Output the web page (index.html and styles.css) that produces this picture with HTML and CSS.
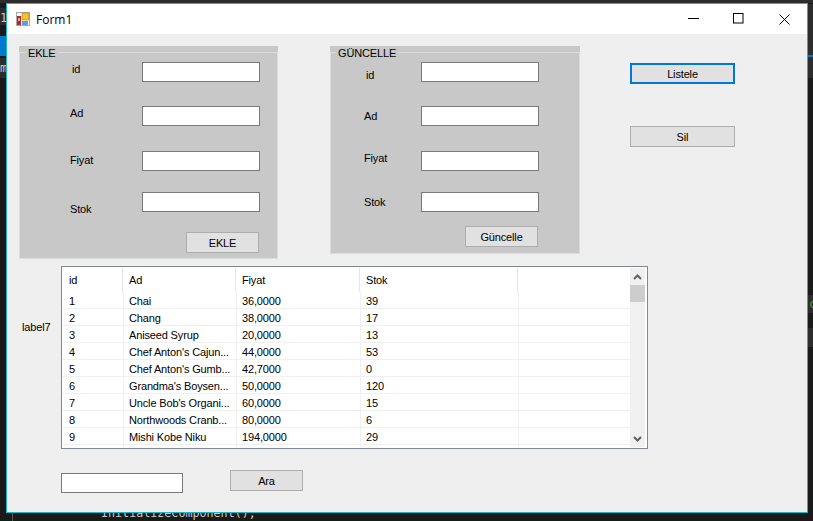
FILE: index.html
```html
<!DOCTYPE html>
<html lang="en">
<head>
  <meta charset="UTF-8">
  <title>Form1</title>
  <link rel="stylesheet" href="styles.css">
</head>
<body>

  <!-- editor showing behind the form -->
  <div class="editor">
    <div class="strip strip-top"></div>
    <div class="strip strip-tab"><span class="code-bit">1</span></div>
    <div class="strip strip-active"></div>
    <div class="strip strip-file"><span class="code-bit">m</span></div>
    <div class="strip strip-right-a"></div>
    <div class="strip strip-right-blue"></div>
    <div class="strip strip-right-b"><span class="code-green">c</span></div>
    <div class="strip strip-right-c"></div>
    <div class="indent-line"></div>
    <div class="code-line">InitializeComponent();</div>
  </div>

  <div class="window">
    <div class="titlebar">
      <svg class="app-icon" width="14" height="14" viewBox="0 0 14 14">
        <rect x="0.5" y="0.5" width="13" height="13" fill="#fff" stroke="#a8a8a8"/>
        <rect x="1" y="4" width="4" height="9" fill="#b02a2a"/>
        <rect x="2" y="6" width="2" height="3" fill="#e8a0a0"/>
        <rect x="6" y="1" width="7" height="7" fill="#f2c230"/>
        <rect x="6" y="1" width="7" height="7" fill="none" stroke="#a87d10" stroke-width="0.6"/>
        <rect x="6" y="9" width="6" height="4" fill="#5b9be8"/>
      </svg>
      <span class="title">Form1</span>
      <div class="caption-buttons">
        <div class="caption-btn">
          <svg width="12" height="12" viewBox="0 0 12 12"><path d="M1 5.5H12" stroke="#000" fill="none"/></svg>
        </div>
        <div class="caption-btn">
          <svg width="12" height="12" viewBox="0 0 12 12"><rect x="0.5" y="0.5" width="9.5" height="9.5" stroke="#000" fill="none"/></svg>
        </div>
        <div class="caption-btn caption-close">
          <svg width="11" height="11" viewBox="0 0 11 11"><path d="M0.5 0.5L10.5 10.5M10.5 0.5L0.5 10.5" stroke="#000" fill="none"/></svg>
        </div>
      </div>
    </div>

    <div class="client">
      <div class="top-row">
        <div class="group group-add">
          <div class="frame">
            <span class="legend">EKLE</span>
            <div class="field field-a"><label class="nudge-id">id</label><input type="text"></div>
            <div class="field field-b"><label>Ad</label><input type="text"></div>
            <div class="field field-c"><label class="nudge-2">Fiyat</label><input type="text"></div>
            <div class="field field-d"><label class="nudge-10">Stok</label><input type="text"></div>
            <div class="form-actions"><button class="btn">EKLE</button></div>
          </div>
        </div>

        <div class="group group-update">
          <div class="frame">
            <span class="legend">GÜNCELLE</span>
            <div class="field field-a"><label class="nudge-id nudge-6">id</label><input type="text"></div>
            <div class="field field-b"><label class="nudge-3">Ad</label><input type="text"></div>
            <div class="field field-c"><label>Fiyat</label><input type="text"></div>
            <div class="field field-d"><label class="nudge-3">Stok</label><input type="text"></div>
            <div class="form-actions"><button class="btn">Güncelle</button></div>
          </div>
        </div>

        <div class="side-actions">
          <button class="btn btn-wide btn-focus">Listele</button>
          <button class="btn btn-wide">Sil</button>
        </div>
      </div>

      <div class="grid-row">
        <span class="grid-label">label7</span>
        <div class="grid-view">
          <div class="grid-body">
            <div class="grid-head">
              <div>id</div><div>Ad</div><div>Fiyat</div><div>Stok</div><div></div>
            </div>
            <div class="grid-line"><div>1</div><div>Chai</div><div>36,0000</div><div>39</div><div></div></div>
            <div class="grid-line"><div>2</div><div>Chang</div><div>38,0000</div><div>17</div><div></div></div>
            <div class="grid-line"><div>3</div><div>Aniseed Syrup</div><div>20,0000</div><div>13</div><div></div></div>
            <div class="grid-line"><div>4</div><div>Chef Anton's Cajun...</div><div>44,0000</div><div>53</div><div></div></div>
            <div class="grid-line"><div>5</div><div>Chef Anton's Gumb...</div><div>42,7000</div><div>0</div><div></div></div>
            <div class="grid-line"><div>6</div><div>Grandma's Boysen...</div><div>50,0000</div><div>120</div><div></div></div>
            <div class="grid-line"><div>7</div><div>Uncle Bob's Organi...</div><div>60,0000</div><div>15</div><div></div></div>
            <div class="grid-line"><div>8</div><div>Northwoods Cranb...</div><div>80,0000</div><div>6</div><div></div></div>
            <div class="grid-line"><div>9</div><div>Mishi Kobe Niku</div><div>194,0000</div><div>29</div><div></div></div>
            <div class="grid-line"><div></div><div></div><div></div><div></div><div></div></div>
          </div>
          <div class="scrollbar">
            <div class="scroll-arrow">
              <svg width="9" height="6" viewBox="0 0 9 6"><path d="M1 5L4.5 1.5L8 5" stroke="#606060" stroke-width="2" fill="none"/></svg>
            </div>
            <div class="scroll-thumb"></div>
            <div class="scroll-track"></div>
            <div class="scroll-arrow">
              <svg width="9" height="6" viewBox="0 0 9 6"><path d="M1 1L4.5 4.5L8 1" stroke="#606060" stroke-width="2" fill="none"/></svg>
            </div>
          </div>
        </div>
      </div>

      <div class="search-row">
        <input class="search-input" type="text">
        <button class="btn">Ara</button>
      </div>
    </div>
  </div>

</body>
</html>
```

FILE: styles.css
```css
* {
  box-sizing: border-box;
}
body {
  margin: 0;
  width: 813px;
  height: 521px;
  overflow: hidden;
  position: relative;
  background-color: #1a1a1a;
  font-family: "Liberation Sans", Arial, sans-serif;
  font-size: 11px;
  letter-spacing: -0.15px;
  color: #000;
}

/* editor behind the window */
.strip {
  position: absolute;
  background: #2d2d2d;
  overflow: hidden;
}
.strip-top {
  left: 0;
  top: 0;
  width: 813px;
  height: 3px;
}
.strip-tab {
  left: 0;
  top: 8px;
  width: 6px;
  height: 17px;
}
.strip-active {
  left: 0;
  top: 36px;
  width: 6px;
  height: 20px;
  background: #007acc;
}
.strip-file {
  left: 0;
  top: 58px;
  width: 6px;
  height: 20px;
}
.strip-right-a {
  left: 808px;
  top: 4px;
  width: 5px;
  height: 74px;
}
.strip-right-blue {
  left: 808px;
  top: 55px;
  width: 5px;
  height: 2px;
  background: #007acc;
}
.strip-right-b {
  left: 808px;
  top: 295px;
  width: 5px;
  height: 18px;
}
.strip-right-c {
  left: 808px;
  top: 328px;
  width: 5px;
  height: 19px;
}
.code-bit {
  position: absolute;
  left: 0;
  top: 3px;
  color: #c8c8c8;
  font-family: "DejaVu Sans Mono", monospace;
  font-size: 12px;
  line-height: 14px;
}
.code-green {
  position: absolute;
  left: 1px;
  top: 2px;
  color: #4e9a3a;
  font-family: "DejaVu Sans Mono", monospace;
  font-size: 12px;
  line-height: 14px;
}
.indent-line {
  position: absolute;
  left: 12px;
  top: 513px;
  width: 1px;
  height: 8px;
  background: #555;
}
.code-line {
  position: absolute;
  left: 101px;
  top: 505px;
  color: #c8c8c8;
  font-family: "DejaVu Sans Mono", monospace;
  font-size: 11.7px;
  letter-spacing: 0;
  line-height: 16px;
}

/* the form */
.window {
  position: absolute;
  left: 6px;
  top: 3px;
  width: 802px;
  height: 510px;
  border: 1px solid #17b8c8;
  background: #efefef;
}
.titlebar {
  display: flex;
  align-items: center;
  height: 30px;
  padding-left: 9px;
  background: #fff;
}
.app-icon {
  margin-right: 6px;
}
.title {
  font-family: "Open Sans", sans-serif;
  font-size: 12px;
  letter-spacing: 0;
}
.caption-buttons {
  display: flex;
  margin-left: auto;
}
.caption-btn {
  display: flex;
  align-items: center;
  justify-content: center;
  width: 46px;
  height: 30px;
}
.caption-close {
  width: 45px;
}
.client {
  padding: 12px 0 0 12px;
}
.top-row {
  display: flex;
  align-items: flex-start;
  height: 220px;
}

/* group boxes */
.group {
  padding-top: 6px;
  background: #c8c8c8;
}
.group-add {
  width: 259px;
  height: 213px;
}
.group-update {
  width: 250px;
  height: 208px;
  margin-left: 52px;
}
.frame {
  position: relative;
  height: 100%;
  padding-top: 9px;
  border: 1px solid #dcdcdc;
}
.group-add .frame {
  padding-left: 50px;
}
.group-update .frame {
  padding-left: 33px;
}
.legend {
  position: absolute;
  left: 6px;
  top: -7px;
  padding: 0 2px;
  background: #c8c8c8;
  line-height: 14px;
}
.group-update .legend {
  left: 5px;
}
.field {
  display: flex;
  align-items: flex-start;
}
.field-a {
  height: 44px;
}
.field-b {
  height: 45px;
}
.field-c {
  height: 41px;
}
.field-d {
  height: 40px;
}
.group-update .field-d {
  height: 34px;
}
.field label {
  line-height: 14px;
}
.group-add .field label {
  width: 72px;
}
.group-update .field label {
  width: 57px;
}
.field input, .search-input {
  width: 118px;
  height: 20px;
  padding: 1px 3px;
  border: 1px solid #7a7a7a;
  border-radius: 0;
  background: #fff;
}
.nudge-id {
  padding-left: 2px;
}
.nudge-2 {
  margin-top: 2px;
}
.nudge-3 {
  margin-top: 3px;
}
.nudge-6 {
  margin-top: 6px;
}
.nudge-10 {
  margin-top: 10px;
}
.form-actions {
  display: flex;
  justify-content: flex-end;
}
.group-add .form-actions {
  padding-right: 18px;
}
.group-update .form-actions {
  padding-right: 41px;
}

/* buttons */
.btn {
  width: 73px;
  height: 21px;
  padding: 0;
  border: 1px solid #adadad;
  border-radius: 0;
  background: #e1e1e1;
  color: #000;
  font-family: "Liberation Sans", Arial, sans-serif;
  font-size: 11px;
  letter-spacing: -0.15px;
}
.btn-wide {
  width: 105px;
}
.btn-focus {
  border: 2px solid #0078d7;
}
.side-actions {
  display: flex;
  flex-direction: column;
  gap: 42px;
  margin-left: 50px;
  padding-top: 17px;
}

/* data grid */
.grid-row {
  display: flex;
  align-items: flex-start;
}
.grid-label {
  width: 42px;
  margin-top: 54px;
  padding-left: 3px;
  line-height: 14px;
}
.grid-view {
  display: flex;
  width: 587px;
  height: 183px;
  padding: 1px 2px 1px 1px;
  border: 1px solid #828790;
  background: #fff;
}
.grid-body {
  width: 567px;
  height: 179px;
  overflow: hidden;
}
.grid-head, .grid-line {
  display: grid;
}
.grid-head {
  grid-template-columns: 60px 113px 124px 158px 1fr;
  height: 24px;
  line-height: 24px;
}
.grid-head div {
  padding-left: 6px;
  border-right: 1px solid #e5e5e5;
}
.grid-head div:last-child {
  border-right: none;
}
.grid-line {
  grid-template-columns: 61px 113px 124px 158px 1fr;
  height: 17px;
  line-height: 18px;
  border-bottom: 1px solid #f0f0f0;
}
.grid-line div {
  padding-left: 5px;
  border-right: 1px solid #f0f0f0;
  white-space: nowrap;
  overflow: hidden;
}
.grid-line div:first-child {
  padding-left: 6px;
}
.grid-line div:last-child {
  border-right: none;
}
.scrollbar {
  display: flex;
  flex-direction: column;
  width: 15px;
  background: #f0f0f0;
}
.scroll-arrow {
  display: flex;
  align-items: center;
  justify-content: center;
  height: 17px;
  flex-shrink: 0;
  background: #f0f0f0;
}
.scroll-thumb {
  height: 17px;
  flex-shrink: 0;
  background: #cdcdcd;
}
.scroll-track {
  flex: 1;
}

/* search */
.search-row {
  display: flex;
  align-items: flex-start;
  margin-top: 21px;
  padding-left: 42px;
}
.search-input {
  width: 122px;
  margin-top: 3px;
  margin-right: 47px;
}
```
